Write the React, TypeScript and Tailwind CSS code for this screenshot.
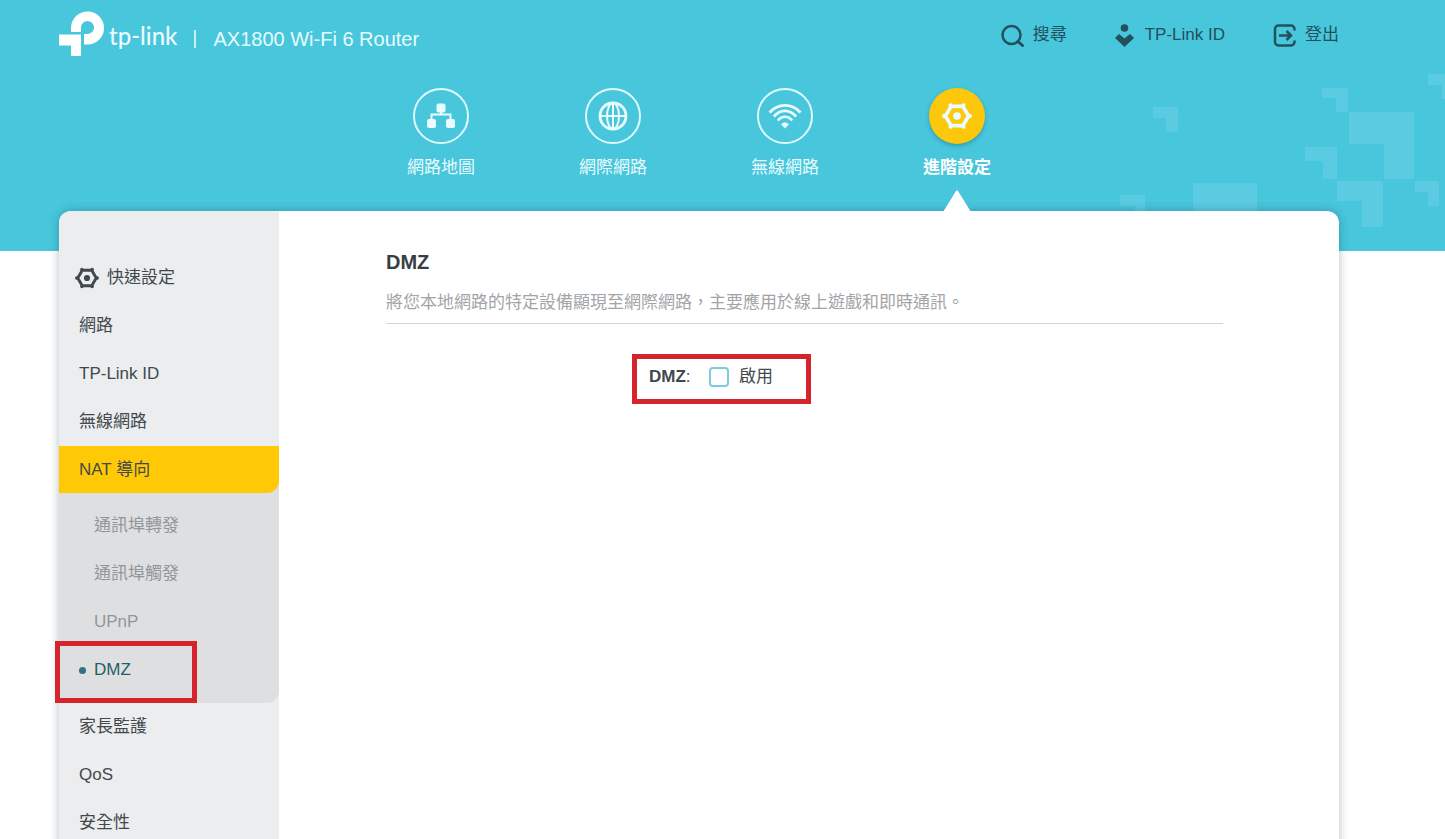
import { useState } from "react";
import type { ReactNode } from "react";

interface NavTab {
  label: string;
  icon: ReactNode;
}

interface MenuItem {
  label: string;
  icon?: ReactNode;
  children?: string[];
}

function GearIcon({ className }: { className?: string }) {
  return (
    <svg viewBox="0 0 28 26" className={className} aria-hidden="true">
      <path
        d="M8.500 4h11L24.800 13 19.500 22h-11L3.200 13z"
        fill="none"
        stroke="currentColor"
        strokeWidth="3.400"
        strokeLinejoin="round"
      />
      <g fill="currentColor">
        <circle cx="14" cy="13" r="3.600" />
        <circle cx="8" cy="3" r="2" />
        <circle cx="20" cy="3" r="2" />
        <circle cx="8" cy="23" r="2" />
        <circle cx="20" cy="23" r="2" />
        <circle cx="2" cy="13" r="2" />
        <circle cx="26" cy="13" r="2" />
      </g>
    </svg>
  );
}

function MapIcon() {
  return (
    <svg viewBox="0 0 28 26" className="w-7 h-[26px]" fill="currentColor" aria-hidden="true">
      <rect x="9.500" y="0.500" width="9" height="9" rx="2" />
      <rect x="0" y="16" width="9" height="9" rx="2" />
      <rect x="19" y="16" width="9" height="9" rx="2" />
      <path d="M14 9v2.500M4.500 17v-5.500h19V17" fill="none" stroke="currentColor" strokeWidth="2" />
    </svg>
  );
}

function GlobeIcon() {
  return (
    <svg viewBox="0 0 30 30" className="w-[30px] h-[30px]" fill="none" stroke="currentColor" strokeWidth="2" aria-hidden="true">
      <circle cx="15" cy="15" r="13" strokeWidth="2.800" />
      <ellipse cx="15" cy="15" rx="6" ry="13" />
      <path d="M15 2v26M2 15h26" />
    </svg>
  );
}

function WifiIcon() {
  return (
    <svg viewBox="0 0 34 26" className="w-[34px] h-[26px]" fill="none" stroke="currentColor" strokeWidth="2.800" aria-hidden="true">
      <path d="M1.500 9.500C10 0 24 0 32.500 9.500" />
      <path d="M5.800 13.500C12.500 6 21.500 6 28.200 13.500" />
      <path d="M9.800 17.500C14 12.500 20 12.500 24.200 17.500" strokeWidth="2.400" />
      <path d="M13.200 21.500c2-2.600 5.600-2.600 7.600 0L17 25.500z" fill="currentColor" stroke="none" />
    </svg>
  );
}

function LogoMark() {
  return (
    <svg viewBox="0 0 45 45" className="w-[45px] h-[45px]" fill="currentColor" aria-hidden="true">
      <path d="M12 21v-4.500A16.500 16.500 0 1 1 28.500 33.500H25V23h4a6.500 6.500 0 1 0-7-6.500V21z" />
      <path d="M0 23.500h22V45H12V34.500H0z" />
    </svg>
  );
}

function SearchIcon() {
  return (
    <svg viewBox="0 0 24 24" className="w-6 h-6" fill="none" stroke="currentColor" strokeWidth="2.500" aria-hidden="true">
      <circle cx="10.500" cy="12" r="9" />
      <path d="M17 18.500l4.500 4" strokeWidth="3" strokeLinecap="round" />
    </svg>
  );
}

function CloudIdIcon() {
  return (
    <svg viewBox="0 0 20 24" className="w-5 h-6" fill="currentColor" aria-hidden="true">
      <circle cx="9.500" cy="5" r="3.800" />
      <path d="M4 11l5.500 4.500L15 11l4 4-9.500 9L0 15z" />
    </svg>
  );
}

function LogoutIcon() {
  return (
    <svg viewBox="0 0 24 24" className="w-6 h-6" fill="none" stroke="currentColor" strokeWidth="2.500" aria-hidden="true">
      <path d="M21.500 7.500V6A3.500 3.500 0 0 0 18 2.500H5.500A3.500 3.500 0 0 0 2 6v13a3.500 3.500 0 0 0 3.500 3.500H18a3.500 3.500 0 0 0 3.500-3.500v-1.500" />
      <path d="M6 12.500h12M13.500 8l4.500 4.500-4.500 4.500" />
    </svg>
  );
}

// Faint corner blocks at the right side of the banner
function BannerPattern() {
  return (
    <svg viewBox="0 0 345 251" className="absolute right-0 top-0 w-[345px] h-[251px]" fill="#5bcbe1" aria-hidden="true">
      <path d="M53 107h25v25H66v-14H53z" />
      <path d="M222 88h26v24h-12V98h-14z" />
      <path d="M249 112h65v67h-30v-35h-35z" />
      <path d="M205 147h32v32h-14v-18h-18z" />
      <path d="M237 181h46v46h-21v-26h-25z" />
      <path d="M315 181h24v25h-11v-14h-13z" />
      <path d="M328 74h17v25h-3V85h-14z" />
      <path d="M93 183h64v40H93z" />
      <path d="M20 195h25v25H35v-14H20z" />
    </svg>
  );
}

const tabs: NavTab[] = [
  { label: "網路地圖", icon: <MapIcon /> },
  { label: "網際網路", icon: <GlobeIcon /> },
  { label: "無線網路", icon: <WifiIcon /> },
  { label: "進階設定", icon: <GearIcon className="w-[30px] h-7" /> },
];

const menu: MenuItem[] = [
  { label: "快速設定", icon: <GearIcon className="w-6 h-6" /> },
  { label: "網路" },
  { label: "TP-Link ID" },
  { label: "無線網路" },
  { label: "NAT 導向", children: ["通訊埠轉發", "通訊埠觸發", "UPnP", "DMZ"] },
  { label: "家長監護" },
  { label: "QoS" },
  { label: "安全性" },
];

const activeTab = "進階設定";
const activePage = "DMZ";

function Header() {
  return (
    <header className="relative h-[251px] bg-[#48c6db] pl-[59px] pr-[106px]">
      <BannerPattern />
      <div className="relative flex h-[88px] items-start justify-between">
        <div className="flex items-start pt-[11px] text-white">
          <a href="#home" className="flex items-start gap-[5px]">
            <LogoMark />
            <span className="pt-[11px] font-['Lato',sans-serif] text-2xl leading-7 font-medium text-[#eafcff]">tp-link</span>
          </a>
          <span className="mx-[17px] mt-[19px] h-[18px] w-0.5 bg-[#c5f3f8]" />
          <h1 className="mt-[14px] text-xl leading-7 text-[#e6fbff]">AX1800 Wi-Fi 6 Router</h1>
        </div>
        <div className="flex items-center gap-12 pt-[23px] text-[#22505b]">
          <button type="button" className="flex items-center gap-2">
            <SearchIcon />
            搜尋
          </button>
          <button type="button" className="flex items-center gap-2.5">
            <CloudIdIcon />
            TP-Link ID
          </button>
          <button type="button" className="flex items-center gap-2">
            <LogoutIcon />
            登出
          </button>
        </div>
      </div>

      <nav className="relative flex justify-center">
        {tabs.map((t) => {
          const active = t.label === activeTab;
          return (
            <a
              key={t.label}
              href={`#${t.label}`}
              aria-current={active ? "page" : undefined}
              className="flex w-[172px] flex-col items-center text-[#e9fcff]"
            >
              <span
                className={`flex h-14 w-14 items-center justify-center rounded-full ${
                  active
                    ? "bg-[#fdc80b] shadow-[0_2px_4px_rgba(0,80,100,0.35)]"
                    : "border-2 border-[#dffbff]"
                }`}
              >
                {t.icon}
              </span>
              <span className={`mt-3 leading-6 ${active ? "font-bold text-white" : ""}`}>
                {t.label}
              </span>
              {active && (
                <svg viewBox="0 0 28 22" className="relative z-10 mt-2.5 h-[22px] w-7" fill="white" aria-hidden="true">
                  <path d="M13 1q1-1.500 2 0l13 21H0z" />
                </svg>
              )}
            </a>
          );
        })}
      </nav>
    </header>
  );
}

function Sidebar() {
  return (
    <aside className="w-[220px] shrink-0 rounded-tl-xl bg-[#ebedee] pt-[43px] text-[#41494f]">
      <ul>
        {menu.map((m) => (
          <li key={m.label}>
            <a
              href={`#${m.label}`}
              className={`flex items-center gap-2 ${m.icon ? "pl-4" : "pl-5"} ${
                m.children ? "relative h-[47px] rounded-br-xl bg-[#ffca05]" : "h-12"
              }`}
            >
              {m.icon}
              {m.label}
            </a>
            {m.children && (
              <ul className="-mt-3 rounded-br-xl bg-[#dedfe1] pt-[21px] pb-[9px]">
                {m.children.map((c) => {
                  const active = c === activePage;
                  return (
                    <li key={c} className="relative">
                      <a
                        href={`#${c}`}
                        className={`flex h-12 items-center ${
                          active ? "gap-2 pl-5 text-[#1f5f68]" : "pl-[35px] text-[#90979c]"
                        }`}
                      >
                        {active && <span className="h-[7px] w-[7px] rounded-full bg-[#2f7480]" />}
                        {c}
                      </a>
                      {active && (
                        <span className="pointer-events-none absolute -left-1 -top-[5px] h-[62px] w-[142px] border-5 border-[#d4242c]" />
                      )}
                    </li>
                  );
                })}
              </ul>
            )}
          </li>
        ))}
      </ul>
    </aside>
  );
}

export default function App() {
  const [enabled, setEnabled] = useState(false);

  return (
    <div className="min-h-screen bg-white font-['Liberation_Sans','Noto_Sans_CJK_TC',sans-serif] text-[17px] leading-6">
      <Header />
      <div className="relative -mt-10 ml-[59px] mr-[106px] flex min-h-[680px] rounded-t-xl bg-white shadow-[0_0_10px_rgba(0,40,60,0.3)]">
        <Sidebar />
        <main className="min-w-0 flex-1 pl-[107px] pr-[116px] pt-[37px]">
          <h2 className="text-xl leading-7 font-bold text-[#363f45]">DMZ</h2>
          <p className="mt-[15px] border-b border-[#d2d4d5] pb-2 text-[#a2a5a8]">
            將您本地網路的特定設備顯現至網際網路，主要應用於線上遊戲和即時通訊。
          </p>
          <div className="mt-[30px] ml-[246px] flex h-[50px] w-[179px] items-center border-5 border-[#d4242c] pl-3 pb-1 text-[#41494f]">
            <span className="w-[60px]">
              <b>DMZ</b>:
            </span>
            <input
              id="dmz-enable"
              type="checkbox"
              checked={enabled}
              onChange={(e) => setEnabled(e.target.checked)}
              className="h-5 w-5 appearance-none rounded border-2 border-[#7ccdd6] bg-white checked:bg-[#48c6db]"
            />
            <label htmlFor="dmz-enable" className="ml-2.5">
              啟用
            </label>
          </div>
        </main>
      </div>
    </div>
  );
}
